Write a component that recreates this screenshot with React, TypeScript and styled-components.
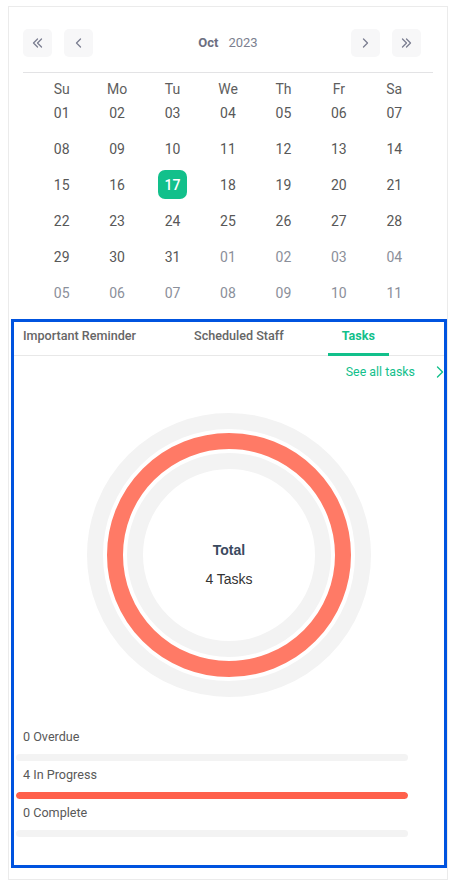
import React from 'react';
import styled, { createGlobalStyle, css } from 'styled-components';

const GREEN = '#12c08b';

const GlobalStyle = createGlobalStyle`
  html, body { margin: 0; padding: 0; background: #ffffff; }
  body { font-family: Roboto, "Liberation Sans", Arial, sans-serif; -webkit-font-smoothing: antialiased; }
  * { box-sizing: border-box; }
`;

const Page = styled.div`
  padding: 6px 7px 6px 8px;
`;

const Card = styled.div`
  width: 440px;
  border: 1px solid #ebebeb;
  background: #fff;
  padding-bottom: 11px;
`;

/* ---------------- Calendar ---------------- */

const Calendar = styled.section`
  padding: 22px 14px 12px;
`;

const CalHeader = styled.div`
  display: grid;
  grid-template-columns: 1fr auto 1fr;
  align-items: center;
  height: 44px;
  padding-bottom: 15px;
  border-bottom: 1px solid #e3e3e5;
`;

const NavGroup = styled.div<{ $end?: boolean }>`
  display: flex;
  gap: 12px;
  ${(p) =>
    p.$end &&
    css`
      justify-self: end;
      margin-right: 12px;
    `}
`;

const NavButton = styled.button`
  width: 29px;
  height: 28px;
  border: none;
  border-radius: 5px;
  background: #f7f7f8;
  padding: 0;
  display: flex;
  align-items: center;
  justify-content: center;
  color: #7b7e91;
  cursor: pointer;
`;

const Title = styled.div`
  display: flex;
  align-items: baseline;
  gap: 10px;
  font-size: 13px;
  line-height: 20px;
`;

const Month = styled.span`
  font-weight: 700;
  color: #6c6e80;
`;

const Year = styled.span`
  font-weight: 400;
  color: #7c7f8f;
`;

const WeekRow = styled.div`
  display: grid;
  grid-template-columns: repeat(7, 1fr);
  padding: 0 11px;
  margin-top: 7px;
`;

const WeekDay = styled.div`
  text-align: center;
  font-size: 14px;
  line-height: 18px;
  color: #5e5e5e;
`;

const DayGrid = styled.div`
  display: grid;
  grid-template-columns: repeat(7, 1fr);
  grid-auto-rows: 29px;
  row-gap: 7px;
  padding: 0 11px;
`;

const DayCell = styled.div`
  display: flex;
  justify-content: center;
`;

const Day = styled.div<{ $muted?: boolean; $selected?: boolean }>`
  width: 29px;
  height: 29px;
  border-radius: 7px;
  display: flex;
  align-items: center;
  justify-content: center;
  font-size: 14px;
  color: ${(p) => (p.$muted ? '#8b8f9a' : '#585858')};
  ${(p) =>
    p.$selected &&
    css`
      background: ${GREEN};
      color: #fff;
      font-weight: 500;
    `}
`;

/* ---------------- Tasks panel ---------------- */

const Panel = styled.section`
  margin-left: 2px;
  border: 3px solid #0053df;
  padding-bottom: 28px;
`;

const Tabs = styled.div`
  display: flex;
  gap: 30px;
  padding-left: 9px;
  border-bottom: 1px solid #e8e8e8;
`;

const Tab = styled.div<{ $active?: boolean }>`
  position: relative;
  padding: 4px 14px 9px;
  font-size: 12.6px;
  line-height: 20px;
  font-weight: 500;
  color: ${(p) => (p.$active ? GREEN : '#666666')};
  white-space: nowrap;
  &:first-child {
    padding-left: 0;
  }
  ${(p) =>
    p.$active &&
    css`
      font-weight: 700;
      &::after {
        content: '';
        position: absolute;
        left: 0;
        right: 0;
        bottom: -1px;
        height: 3px;
        background: ${GREEN};
      }
    `}
`;

const SeeAllRow = styled.div`
  display: flex;
  justify-content: flex-end;
  align-items: center;
  gap: 21px;
  margin-top: 6px;
  padding-right: 0;
  height: 20px;
`;

const SeeAllLink = styled.a`
  font-size: 12.4px;
  line-height: 20px;
  color: ${GREEN};
  text-decoration: none;
`;

const ChartWrap = styled.div`
  position: relative;
  display: flex;
  justify-content: center;
  margin-top: 31px;
`;

const ChartCenter = styled.div`
  position: absolute;
  inset: 0;
  display: flex;
  flex-direction: column;
  align-items: center;
  padding-top: 127px;
  font-family: "Liberation Sans", Arial, sans-serif;
  font-size: 14px;
  line-height: 20px;
`;

const TotalLabel = styled.div`
  font-weight: 700;
  color: #3b4a5f;
`;

const TotalValue = styled.div`
  margin-top: 9px;
  color: #333333;
`;

const Progress = styled.div`
  display: flex;
  flex-direction: column;
  gap: 4px;
  margin-top: 30px;
`;

const ProgressItem = styled.div`
  display: flex;
  flex-direction: column;
  gap: 7px;
`;

const ProgressLabel = styled.div`
  padding-left: 9px;
  font-size: 12.6px;
  line-height: 20px;
  color: #595959;
`;

const Track = styled.div`
  margin-left: 2px;
  width: 392px;
  height: 7px;
  border-radius: 4px;
  background: #f3f3f3;
  overflow: hidden;
`;

const Fill = styled.div`
  height: 100%;
  border-radius: 4px;
  background: #ff604b;
`;

/* ---------------- Icons ---------------- */

const Chevron = ({ dir, double }: { dir: 'left' | 'right'; double?: boolean }) => {
  const single = dir === 'left' ? 'M5.5 1 L1.5 5 L5.5 9' : 'M1.5 1 L5.5 5 L1.5 9';
  const second = dir === 'left' ? 'M9.5 1 L5.5 5 L9.5 9' : 'M5.5 1 L9.5 5 L5.5 9';
  return (
    <svg width={double ? 11 : 7} height={10} viewBox={double ? '0 0 11 10' : '0 0 7 10'} fill="none">
      <path d={single} stroke="currentColor" strokeWidth="1.3" strokeLinecap="round" strokeLinejoin="round" />
      {double && (
        <path d={second} stroke="currentColor" strokeWidth="1.3" strokeLinecap="round" strokeLinejoin="round" />
      )}
    </svg>
  );
};

const LinkChevron = () => (
  <svg width="8" height="12" viewBox="0 0 8 12" fill="none">
    <path d="M1.5 1 L6.5 6 L1.5 11" stroke={GREEN} strokeWidth="1.4" strokeLinecap="round" strokeLinejoin="round" />
  </svg>
);

const RingChart = () => (
  <svg width="284" height="284" viewBox="0 0 284 284">
    <circle cx="142" cy="142" r="134" fill="none" stroke="#f3f3f3" strokeWidth="16" />
    <circle cx="142" cy="142" r="114" fill="none" stroke="#ff7a66" strokeWidth="16" />
    <circle cx="142" cy="142" r="94" fill="none" stroke="#f3f3f3" strokeWidth="16" />
  </svg>
);

/* ---------------- Data ---------------- */

const WEEKDAYS = ['Su', 'Mo', 'Tu', 'We', 'Th', 'Fr', 'Sa'];

type DayInfo = { label: string; muted: boolean; selected: boolean };

const buildDays = (): DayInfo[] => {
  const days: DayInfo[] = [];
  for (let d = 1; d <= 31; d++) {
    days.push({ label: String(d).padStart(2, '0'), muted: false, selected: d === 17 });
  }
  for (let d = 1; d <= 11; d++) {
    days.push({ label: String(d).padStart(2, '0'), muted: true, selected: false });
  }
  return days;
};

const PROGRESS = [
  { label: '0 Overdue', value: 0 },
  { label: '4 In Progress', value: 100 },
  { label: '0 Complete', value: 0 },
];

export default function App() {
  const days = buildDays();
  return (
    <>
      <GlobalStyle />
      <Page>
        <Card>
          <Calendar>
            <CalHeader>
              <NavGroup>
                <NavButton aria-label="Previous year">
                  <Chevron dir="left" double />
                </NavButton>
                <NavButton aria-label="Previous month">
                  <Chevron dir="left" />
                </NavButton>
              </NavGroup>
              <Title>
                <Month>Oct</Month>
                <Year>2023</Year>
              </Title>
              <NavGroup $end>
                <NavButton aria-label="Next month">
                  <Chevron dir="right" />
                </NavButton>
                <NavButton aria-label="Next year">
                  <Chevron dir="right" double />
                </NavButton>
              </NavGroup>
            </CalHeader>
            <WeekRow>
              {WEEKDAYS.map((w) => (
                <WeekDay key={w}>{w}</WeekDay>
              ))}
            </WeekRow>
            <DayGrid>
              {days.map((d, i) => (
                <DayCell key={i}>
                  <Day $muted={d.muted} $selected={d.selected}>
                    {d.label}
                  </Day>
                </DayCell>
              ))}
            </DayGrid>
          </Calendar>

          <Panel>
            <Tabs>
              <Tab>Important Reminder</Tab>
              <Tab>Scheduled Staff</Tab>
              <Tab $active>Tasks</Tab>
            </Tabs>
            <SeeAllRow>
              <SeeAllLink href="#">See all tasks</SeeAllLink>
              <LinkChevron />
            </SeeAllRow>
            <ChartWrap>
              <RingChart />
              <ChartCenter>
                <TotalLabel>Total</TotalLabel>
                <TotalValue>4 Tasks</TotalValue>
              </ChartCenter>
            </ChartWrap>
            <Progress>
              {PROGRESS.map((p) => (
                <ProgressItem key={p.label}>
                  <ProgressLabel>{p.label}</ProgressLabel>
                  <Track>
                    <Fill style={{ width: `${p.value}%` }} />
                  </Track>
                </ProgressItem>
              ))}
            </Progress>
          </Panel>
        </Card>
      </Page>
    </>
  );
}
